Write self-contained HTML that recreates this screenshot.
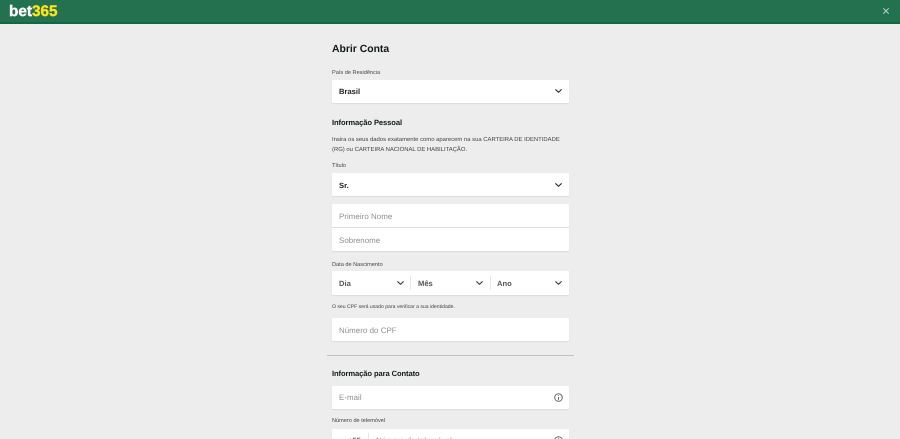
<!DOCTYPE html>
<html lang="pt">
<head>
<meta charset="utf-8">
<title>bet365 Abrir Conta</title>
<style>
html,body{margin:0;padding:0;width:900px;height:439px;overflow:hidden;background:#ecedec}
#page{position:relative;width:900px;height:439px;overflow:hidden;background:#ecedec;font-family:"Liberation Sans",sans-serif;color:#111;text-rendering:geometricPrecision}
.abs{position:absolute;white-space:nowrap}
#hdr{position:absolute;left:0;top:0;width:900px;height:22px;background:#24714f;border-bottom:2px solid #0f6a43}
.box{position:absolute;left:332px;width:237px;background:#fff;border-radius:1px;box-shadow:0 1px 1px rgba(0,0,0,.08)}
.lbl{font-size:5.6px;color:#444;line-height:8px}
.h{font-size:7.6px;font-weight:bold;color:#15191a;line-height:10px;letter-spacing:-.1px}
.sel{font-size:7.6px;font-weight:bold;color:#222;line-height:10px}
.ph{font-size:7.9px;color:#8d8f8f;line-height:10px;letter-spacing:.05px}
svg{position:absolute;overflow:visible}
</style>
</head>
<body>
<div id="page">
<div id="hdr"></div>
<div class="abs" style="left:9px;top:4px;font-size:15.3px;line-height:16px;font-weight:bold;color:#fff;-webkit-text-stroke:.4px #fff">bet<span style="color:#ffe418;-webkit-text-stroke:.4px #ffe418">365</span></div>
<svg style="left:883px;top:8px" width="6" height="6" viewBox="0 0 6 6"><path d="M.3.3 5.7 5.7M5.7.3.3 5.7" stroke="#b5dccb" stroke-width="1" fill="none"/></svg>

<div class="abs" style="left:332px;top:42.6px;font-size:10.4px;line-height:14px;font-weight:bold;color:#15191a">Abrir Conta</div>

<div class="abs lbl" style="left:332px;top:69px">País de Residência</div>
<div class="box" style="top:80px;height:23px"></div>
<div class="abs sel" style="left:339px;top:87px">Brasil</div>
<svg style="left:555px;top:89px" width="7" height="4" viewBox="0 0 7 4"><path d="M.4.4 3.5 3.3 6.6.4" stroke="#222" stroke-width="1.1" fill="none"/></svg>

<div class="abs h" style="left:332px;top:118px">Informação Pessoal</div>
<div class="abs" style="left:332px;top:136px;font-size:5.9px;line-height:9.5px;color:#444">Insira os seus dados exatamente como aparecem na sua CARTEIRA DE IDENTIDADE<br>(RG) ou CARTEIRA NACIONAL DE HABILITAÇÃO.</div>

<div class="abs lbl" style="left:332px;top:162px">Título</div>
<div class="box" style="top:173px;height:23px"></div>
<div class="abs sel" style="left:339px;top:181px">Sr.</div>
<svg style="left:555px;top:183px" width="7" height="4" viewBox="0 0 7 4"><path d="M.4.4 3.5 3.3 6.6.4" stroke="#222" stroke-width="1.1" fill="none"/></svg>

<div class="box" style="top:204px;height:23px"></div>
<div class="abs ph" style="left:339px;top:211.6px">Primeiro Nome</div>
<div class="box" style="top:228px;height:23px"></div>
<div class="abs ph" style="left:339px;top:236px">Sobrenome</div>

<div class="abs lbl" style="left:332px;top:261px">Data de Nascimento</div>
<div class="box" style="top:271px;height:24px"></div>
<div class="abs" style="left:410px;top:276px;width:1px;height:14px;background:#e6e6e6"></div>
<div class="abs" style="left:490px;top:276px;width:1px;height:14px;background:#e6e6e6"></div>
<div class="abs sel" style="left:339px;top:279px;color:#555">Dia</div>
<div class="abs sel" style="left:418px;top:279px;color:#555">Mês</div>
<div class="abs sel" style="left:497px;top:279px;color:#555">Ano</div>
<svg style="left:397px;top:281px" width="7" height="4" viewBox="0 0 7 4"><path d="M.4.4 3.5 3.3 6.6.4" stroke="#333" stroke-width="1.1" fill="none"/></svg>
<svg style="left:476px;top:281px" width="7" height="4" viewBox="0 0 7 4"><path d="M.4.4 3.5 3.3 6.6.4" stroke="#333" stroke-width="1.1" fill="none"/></svg>
<svg style="left:555px;top:281px" width="7" height="4" viewBox="0 0 7 4"><path d="M.4.4 3.5 3.3 6.6.4" stroke="#333" stroke-width="1.1" fill="none"/></svg>

<div class="abs lbl" style="left:332px;top:303px;font-size:5.1px">O seu CPF será usado para verificar a sua identidade.</div>
<div class="box" style="top:318px;height:23px"></div>
<div class="abs ph" style="left:339px;top:325.6px">Número do CPF</div>

<div class="abs" style="left:327px;top:355px;width:247px;height:1px;background:#c0c3c1"></div>

<div class="abs h" style="left:332px;top:369px">Informação para Contato</div>
<div class="box" style="top:386px;height:23px"></div>
<div class="abs ph" style="left:339px;top:393px">E-mail</div>
<svg style="left:554px;top:393px" width="9" height="9" viewBox="0 0 9 9"><circle cx="4.5" cy="4.5" r="3.8" stroke="#666" stroke-width="1" fill="none"/><path d="M4.5 2.2V3M4.5 4V6.8" stroke="#666" stroke-width="1" fill="none"/></svg>

<div class="abs lbl" style="left:332px;top:417px">Número de telemóvel</div>
<div class="box" style="top:429px;height:23px"></div>
<div class="abs sel" style="left:348px;top:436px;color:#555">+55</div>
<div class="abs" style="left:368px;top:433px;width:1px;height:14px;background:#e6e6e6"></div>
<div class="abs ph" style="left:376px;top:436px">Número de telemóvel</div>
<svg style="left:554px;top:436px" width="9" height="9" viewBox="0 0 9 9"><circle cx="4.5" cy="4.5" r="3.8" stroke="#666" stroke-width="1" fill="none"/><path d="M4.5 2.2V3M4.5 4V6.8" stroke="#666" stroke-width="1" fill="none"/></svg>
</div>
</body>
</html>
